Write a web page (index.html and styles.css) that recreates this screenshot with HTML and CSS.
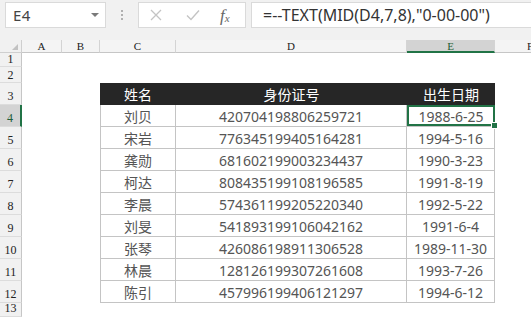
FILE: index.html
```html
<!DOCTYPE html>
<html lang="zh">
<head>
<meta charset="utf-8">
<link rel="stylesheet" href="styles.css">
</head>
<body>
<div class="toolbar">
  <div class="namebox"><span class="ref">E4</span><span class="caret"></span></div>
  <div class="dots"><i></i><i></i><i></i></div>
  <div class="btns">
    <svg class="ico" width="12" height="12" viewBox="0 0 12 12"><path d="M1 1L11 11M11 1L1 11" stroke="#c4c4c4" stroke-width="1.3" fill="none"/></svg>
    <svg class="ico" width="14" height="12" viewBox="0 0 14 12"><path d="M1 6.5L5 10.5L13 1.5" stroke="#c4c4c4" stroke-width="1.4" fill="none"/></svg>
    <span class="fx">f<sub>x</sub></span>
  </div>
  <div class="formula">=--TEXT(MID(D4,7,8),"0-00-00")</div>
</div>
<div class="band"></div>
<div class="sheet">
  <div class="corner"><span class="tri"></span></div>
  <div class="ch">A</div><div class="ch">B</div><div class="ch">C</div><div class="ch">D</div><div class="ch sel">E</div><div class="ch last">F</div>

  <div class="rh r1">1</div><div class="blank span6"></div>
  <div class="rh r2">2</div><div class="blank span6"></div>

  <div class="rh">3</div><div class="blank"></div><div class="blank"></div>
  <div class="th">姓名</div><div class="th">身份证号</div><div class="th">出生日期</div><div class="blank"></div>

  <div class="rh sel">4</div><div class="blank"></div><div class="blank"></div>
  <div class="td first">刘贝</div><div class="td">420704198806259721</div><div class="td active">1988-6-25</div><div class="blank"></div>

  <div class="rh">5</div><div class="blank"></div><div class="blank"></div>
  <div class="td first">宋岩</div><div class="td">776345199405164281</div><div class="td">1994-5-16</div><div class="blank"></div>

  <div class="rh">6</div><div class="blank"></div><div class="blank"></div>
  <div class="td first">龚勋</div><div class="td">681602199003234437</div><div class="td">1990-3-23</div><div class="blank"></div>

  <div class="rh">7</div><div class="blank"></div><div class="blank"></div>
  <div class="td first">柯达</div><div class="td">808435199108196585</div><div class="td">1991-8-19</div><div class="blank"></div>

  <div class="rh">8</div><div class="blank"></div><div class="blank"></div>
  <div class="td first">李晨</div><div class="td">574361199205220340</div><div class="td">1992-5-22</div><div class="blank"></div>

  <div class="rh">9</div><div class="blank"></div><div class="blank"></div>
  <div class="td first">刘旻</div><div class="td">541893199106042162</div><div class="td">1991-6-4</div><div class="blank"></div>

  <div class="rh">10</div><div class="blank"></div><div class="blank"></div>
  <div class="td first">张琴</div><div class="td">426086198911306528</div><div class="td">1989-11-30</div><div class="blank"></div>

  <div class="rh">11</div><div class="blank"></div><div class="blank"></div>
  <div class="td first">林晨</div><div class="td">128126199307261608</div><div class="td">1993-7-26</div><div class="blank"></div>

  <div class="rh">12</div><div class="blank"></div><div class="blank"></div>
  <div class="td first">陈引</div><div class="td">457996199406121297</div><div class="td">1994-6-12</div><div class="blank"></div>

  <div class="rh r13">13</div><div class="blank span6"></div>
</div>
</body>
</html>
```
FILE: styles.css
```css
html, body {
  margin: 0;
  padding: 0;
  background: #ffffff;
}
body {
  width: 531px;
  height: 317px;
  overflow: hidden;
  font-family: "Noto Sans", "Noto Sans CJK SC", sans-serif;
}
.toolbar {
  height: 31px;
  background: #f1f1f1;
  display: flex;
  align-items: flex-start;
  padding-top: 2px;
  box-sizing: border-box;
}
.namebox {
  margin-left: 5px;
  width: 101px;
  height: 26px;
  box-sizing: border-box;
  background: #fff;
  border: 1px solid #dadada;
  display: flex;
  align-items: center;
  justify-content: space-between;
  padding: 0 6px 0 7px;
}
.ref {
  font-size: 15px;
  color: #444;
  letter-spacing: 0.5px;
}
.caret {
  width: 0;
  height: 0;
  border-left: 4px solid transparent;
  border-right: 4px solid transparent;
  border-top: 4px solid #7a7a7a;
}
.dots {
  width: 32px;
  height: 26px;
  display: flex;
  flex-direction: column;
  align-items: center;
  justify-content: center;
  gap: 2px;
}
.dots i {
  display: block;
  width: 2px;
  height: 2px;
  background: #b0b0b0;
}
.btns {
  width: 108px;
  height: 26px;
  box-sizing: border-box;
  background: #fff;
  border: 1px solid #dadada;
  display: flex;
  align-items: center;
  padding-left: 11px;
  gap: 0;
}
.btns .ico:nth-child(1) { margin-right: 24px; }
.btns .ico:nth-child(2) { margin-right: 20px; }
.fx {
  font-family: "Liberation Serif", serif;
  font-style: italic;
  font-size: 17px;
  color: #666;
  line-height: 1;
}
.fx sub {
  font-size: 11px;
  vertical-align: -1px;
}
.formula {
  margin-left: 5px;
  flex: 1;
  height: 26px;
  box-sizing: border-box;
  background: #fff;
  border: 1px solid #dadada;
  border-right: none;
  padding-left: 11px;
  font-size: 16px;
  line-height: 24px;
  color: #333;
  white-space: nowrap;
}
.band {
  height: 9px;
  background: #f1f1f1;
}
.sheet {
  display: grid;
  grid-template-columns: 22px 40px 38px 76px 231px 88px 1fr;
  grid-template-rows: 13px 14px 16px repeat(10, 22px) 14px;
}
.corner {
  background: #f1f1f1;
  border-right: 1px solid #cfcfcf;
  border-bottom: 1px solid #cfcfcf;
  box-sizing: border-box;
  position: relative;
}
.tri {
  position: absolute;
  right: 3px;
  bottom: 2px;
  width: 0;
  height: 0;
  border-left: 6px solid transparent;
  border-bottom: 6px solid #c2c2c2;
}
.ch {
  background: #f4f4f4;
  border-right: 1px solid #d4d4d4;
  border-bottom: 1px solid #c6c6c6;
  box-sizing: border-box;
  font-family: "Liberation Serif", serif;
  font-size: 11px;
  color: #222;
  display: flex;
  align-items: center;
  justify-content: center;
  line-height: 1;
  padding-top: 1px;
}
.ch.sel {
  background: #d3d3d3;
  border-bottom: 2px solid #217346;
  color: #1e5e38;
}
.ch.last {
  justify-content: flex-start;
  padding-left: 32px;
  border-right: none;
}
.rh {
  background: #f1f1f1;
  border-right: 1px solid #c6c6c6;
  border-bottom: 1px solid #dcdcdc;
  box-sizing: border-box;
  font-family: "Liberation Serif", serif;
  font-size: 12px;
  color: #222;
  display: flex;
  align-items: flex-end;
  justify-content: center;
  padding-bottom: 2px;
  line-height: 1;
}
.rh.r1, .rh.r2 { padding-bottom: 1px; }
.rh.sel {
  background: #d3d3d3;
  border-right: 2px solid #217346;
  color: #1e5e38;
}
.span6 { grid-column: span 6; }
.blank { background: #fff; }
.th {
  background: #262626;
  color: #fff;
  font-family: "Noto Sans CJK SC", sans-serif;
  font-size: 14px;
  display: flex;
  align-items: center;
  justify-content: center;
}
.td {
  color: #555;
  font-size: 14px;
  display: flex;
  align-items: center;
  justify-content: center;
  border-right: 1px solid #c4c4c4;
  border-bottom: 1px solid #c4c4c4;
  box-sizing: border-box;
  padding-top: 1px;
}
.td.first {
  border-left: 1px solid #c4c4c4;
  font-family: "Noto Sans CJK SC", sans-serif;
}
.td.active {
  position: relative;
  box-shadow: inset 0 0 0 2px #217346;
  border-right: none;
}
.td.active::after {
  content: "";
  position: absolute;
  right: -3px;
  bottom: -3px;
  width: 5px;
  height: 5px;
  background: #217346;
  border: 1px solid #fff;
}
```
